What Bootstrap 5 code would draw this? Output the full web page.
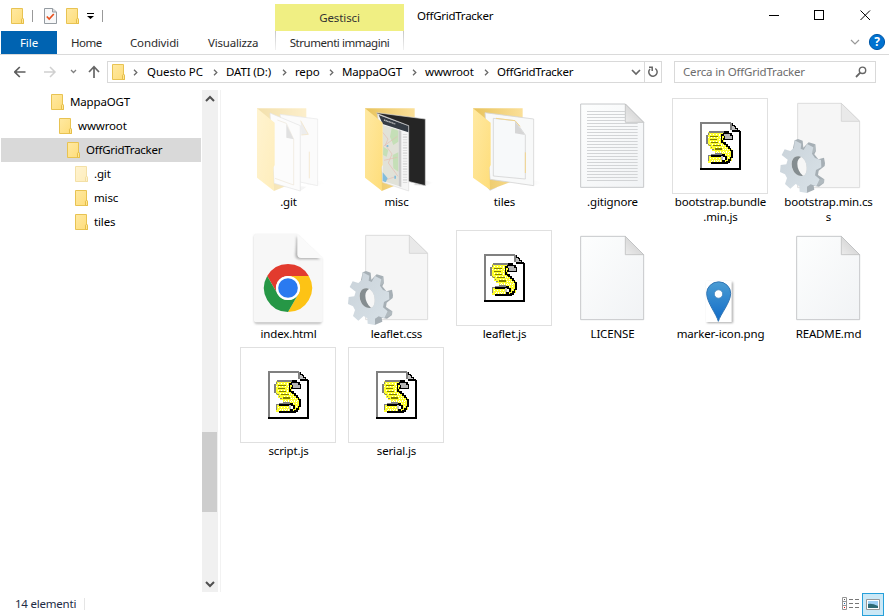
<!DOCTYPE html>
<html lang="it">
<head>
<meta charset="utf-8">
<title>OffGridTracker</title>
<link href="https://cdn.jsdelivr.net/npm/bootstrap@5.3.0/dist/css/bootstrap.min.css" rel="stylesheet">
<style>
body{font:11.5px/16px "Noto Sans","Open Sans",sans-serif;color:#000;background:#fff;height:616px;overflow:hidden;letter-spacing:-.15px}
svg{display:block;flex:none}
.titlebar{height:31px;flex:none}
.quick{width:275px;padding-left:11px}
.quick-sep{width:1px;height:12px;background:#999}
.check-icon{margin-left:3px;margin-right:9px}
.ctx{width:129px;height:27px;margin-top:4px;background:#f0ef83;color:#333;letter-spacing:-.1px}
.win-title{padding-left:13px;letter-spacing:-.25px}
.ribbon{height:24px;flex:none;border-bottom:1px solid #dadada;color:#2b2b2b;letter-spacing:-.05px}
.ribbon .tab{height:23px;white-space:nowrap}
.ribbon .tab-file{width:56px;margin-left:1px;background:#0063b1;color:#fff}
.tab-home{width:73px;padding-left:14px;letter-spacing:-.5px}.tab-cond{width:78px;letter-spacing:-.15px}.tab-vis{width:67px;letter-spacing:-.2px}
.ribbon .tab-ctx{width:129px;height:19px;border:1px solid;border-width:0 1px;border-image:linear-gradient(#c4c4c4,#f4f4f4) 1;padding-top:4px;letter-spacing:-.45px}
.addr{height:35px;flex:none;padding-top:6px}
.addr-nav{width:107px;padding-left:14px;height:22px}
.addr-box{width:555px;height:22px;border:1px solid #d9d9d9;padding-left:4px}
.search-box{width:202px;height:22px;margin-left:12px;border:1px solid #d9d9d9;color:#6d6d6d;padding:0 8px;letter-spacing:-.18px}
.crumb{letter-spacing:-.15px;flex:none}
.c1{width:79px;margin-left:1px;letter-spacing:-.05px}.c2{width:69px}.c3{width:47px}.c4{width:83px}.c5{width:72px}.c6{width:120px;letter-spacing:-.25px}
.crumb svg{margin-right:8px}
.refresh{width:17px;height:20px;margin-left:3px;border-left:1px solid #d9d9d9;flex:none}
.main-area{height:502px;flex:none}
.tree{width:201px}
.tree .node{height:24px;gap:6px}
.lv0{padding-left:51px}.lv1{padding-left:59px}.lv2{padding-left:67px}.lv3{padding-left:75px}
.node.sel{background:#d9d9d9;margin-left:1px;padding-left:66px;letter-spacing:-.25px}
.scroller{width:16px;margin-left:1px;background:#f0f0f0}
.scroller svg{margin-left:3px}
.scroller .thumb{width:15px;height:80px;background:#cdcdcd;margin-bottom:64px}
.split{width:1px;margin-left:2px;background:#f2f2f2}
.files{width:648px;margin-left:13px;padding-top:8px;display:grid;grid-template-columns:repeat(6,108px);grid-template-rows:132px 117px 117px}
.file{text-align:center}
.pic{width:96px;height:96px;margin:0 auto}
.framed{border:1px solid #e0e0e0}
.framed svg{margin:-1px}
.lbl{line-height:15px;padding-left:1px}
.statusbar{height:24px;flex:none;padding-left:15px;padding-right:5px;color:#222b45;letter-spacing:-.22px}
.view-list{margin-right:3px}
.view-on{width:22px;height:23px;border:1px solid #26a0da;background:#cbe8f6}
</style>
</head>
<body class="d-flex flex-column">
<svg width="0" height="0" class="position-absolute">
<defs>
<linearGradient id="gf" x2="1" y2="1"><stop stop-color="#ffe9a2"/><stop offset="1" stop-color="#fedd7a"/></linearGradient>
<linearGradient id="gb" x2="1"><stop stop-color="#e8c35c"/><stop offset="1" stop-color="#fbe09a"/></linearGradient>
<linearGradient id="gp" x2="1" y2="1"><stop stop-color="#fdfefe"/><stop offset="1" stop-color="#f1f3f5"/></linearGradient>
<linearGradient id="gc" x1="0" y1="1" x2="1" y2="0"><stop stop-color="#ececec"/><stop offset="1" stop-color="#c8c8c8"/></linearGradient>
<linearGradient id="gm" x2="0" y2="1"><stop stop-color="#4a9cd3"/><stop offset="1" stop-color="#116bc8"/></linearGradient>
<linearGradient id="gg" x2="1" y2="1"><stop stop-color="#c9d2d9"/><stop offset="1" stop-color="#d9e2e8"/></linearGradient>
<linearGradient id="gs" x2="1"><stop stop-color="#bbb" stop-opacity=".7"/><stop offset="1" stop-color="#ddd" stop-opacity="0"/></linearGradient>
<symbol id="sf" viewBox="0 0 13 16"><path d="M.5.5h11v10.200l1 .5v4.300H.5z" fill="url(#gf)" stroke="#e8c352"/><path d="M10.500 15.500v-4.300l.7-.8h.8l.5.8v4.300z" fill="#ffe794" stroke="#e6be49"/></symbol>
<symbol id="chev" viewBox="0 0 5 7"><path d="M1 .8 3.800 3.500 1 6.200" fill="none" stroke="#686868" stroke-width="1.300"/></symbol>
<symbol id="blank" viewBox="0 0 288 288"><path d="M50 19H184L239 74V269H50z" fill="url(#gp)" stroke="#c6c8ca" stroke-width="3"/><path d="M184 19 239 74H184z" fill="url(#gc)" stroke="#bfc1c2" stroke-width="2.500"/></symbol>
<symbol id="css" viewBox="324 15 288 288"><path d="M377 31H508L563 85V284H377z" fill="#f6f6f6" stroke="#dcdcdc" stroke-width="3"/><path d="M508 31 563 85H508z" fill="#e9e9e9" stroke="#d4d4d4" stroke-width="2.500"/>
<path fill="#a6afb5" d="M368 142 378 138 392 143 394 164 410 148 430 154 432 174 427 184 439 199 456 194 459 211 458 219 440 233 438 246 457 259 456 270 441 281 425 278 427 290 404 300 394 283 368 270 360 180z"/>
<path fill="url(#gg)" fill-rule="evenodd" d="M368 142 388 152 386 167 395 171 405 153 424 163 420 182 429 195 447 201 448 223 432 231 429 247 443 259 433 280 416 274 405 281 405 300 383 296 382 280 371 273 355 287 339 273 345 255 339 244 324 237 326 216 343 214 347 200 329 186 338 169 355 174 366 164zM381 190C366 188 358 201 359 217 361 236 374 249 389 249 402 248 405 235 404 221 402 203 393 192 381 190z"/>
<path fill="#f6f6f6" d="M381 190C366 188 358 201 359 217 361 236 374 249 389 249 402 248 405 235 404 221 402 203 393 192 381 190z"/>
<path fill="#858d90" d="M381 190C366 188 358 201 359 217 361 236 374 249 389 249L393 248C382 238 376 226 376 212 376 203 380 196 387 192z"/>
<path fill="#c5cdd1" d="M429 154 432 173 420 182 424 163zM457 259 456 269 433 280 443 259z" opacity=".35"/></symbol>
<symbol id="js" viewBox="21 9 288 288" shape-rendering="crispEdges">
<path d="M107 83H202V108H225V220H107z" fill="#fff"/><path d="M105 81H199V86H110V218H105z" fill="#808080"/><path d="M105 218H222V108H228V225H105z" fill="#000"/>
<path d="M196 84h5v22h-5z" fill="#808080"/><path d="M200 84h5v5h5v5h4v5h5v5h6v6h-25z" fill="#000"/><path d="M202 92h4v5h4v5h6v4h-14z" fill="#c0c0c0"/>
<path d="M135 109H190V114H200V119H205V136H177V143H184V149H190V155H196V162H201V169H205V187H200V198H194V204H188V208H137V203H129V181H137V176H149V169H142V162H136V153H128V146H123V119H130V112H135z" fill="#ffff2b"/>
<path d="M135 118.500H168M129 127.500H168M135 139.500H165M141 148.500H174M153 157.500H186M156 169.500H195M180 178.500H198M135 190.500H168M138 199.500H186" stroke="#fff" stroke-width="3" stroke-dasharray="3 6"/>
<path d="M162 121.500H168M162 133.500H168M162 142.500H174M168 151.500H180M174 163.500H192M153 172.500H195M183 187.500H198M141 195.500H168" stroke="#fff" stroke-width="3" stroke-dasharray="3 3"/>
<path d="M132 109H178V114H132zM128 114H133V119H128zM123 119H128V147H123zM128 147H133V153H137V158H141V165H146V171H150V177H137V181H129V199H133V184H137V181H172V175H150V171H146V163H141V155H137V149H128z" fill="#808080"/>
<path d="M134 123H160V127H134zM134 132H156V136H134zM138 141H160V145H138zM145 150H168V154H145zM150 160H172V164H150z" fill="#808000"/>
<path d="M178 109H192V114H200V119H205V136H174V130H178V123H170V136H174V143H168V118H174V114H178z" fill="#000"/><path d="M178 118H196V123H201V132H180z" fill="#b5b5b5"/>
<path d="M174 142H183V147H189V153H194V159H199V164H204V190H199V197H194V203H188V207H137V202H182V198H188V192H194V187H199V168H194V163H189V157H184V151H178V146H174z" fill="#000"/>
<path d="M137 181H170V186H137zM172 178H179V182H185V195H179V201H172V195H177V185H172z" fill="#000"/><path d="M169 184h5v12h-5z" fill="#c0c0c0"/><path d="M174 186h5v8h-5z" fill="#fff"/></symbol>
</defs></svg>

<header class="titlebar d-flex">
<div class="quick d-flex align-items-center">
<svg width="13" height="16"><use href="#sf"/></svg><div class="quick-sep ms-2 me-2"></div>
<svg width="13" height="16" class="check-icon" viewBox="0 0 13 16"><path d="M.5.500h8l4 3.500v11.500H.5z" fill="#f7f8f9" stroke="#949ba1"/><path d="M8.500.500V4h4" fill="#ddd" stroke="#949ba1"/><path d="M2.800 8.500 5.200 11l4.600-5" fill="none" stroke="#e8501e" stroke-width="1.700"/></svg>
<svg width="13" height="16" class="me-1"><use href="#sf"/></svg>
<svg width="7" height="6" class="ms-1" viewBox="0 0 7 6"><path d="M0 0h7v1H0zM0 3h7L3.500 6z"/></svg><div class="quick-sep ms-2"></div>
</div>
<div class="ctx d-flex align-items-center justify-content-center">Gestisci</div>
<div class="win-title d-flex align-items-center flex-grow-1">OffGridTracker</div>
<svg width="120" height="31" viewBox="769 0 120 31" fill="none" stroke="#000" shape-rendering="crispEdges"><path d="M769 15.500h10M814.500 10.500h9v9h-9z"/><path d="m860.500 10.500 9.500 9.500m0-9.500-9.500 9.500" shape-rendering="auto"/></svg>
</header>
<nav class="ribbon d-flex">
<div class="tab tab-file d-flex align-items-center justify-content-center">File</div>
<div class="tab tab-home d-flex align-items-center">Home</div>
<div class="tab tab-cond d-flex align-items-center">Condividi</div>
<div class="tab tab-vis d-flex align-items-center">Visualizza</div>
<div class="tab tab-ctx d-flex align-items-center justify-content-center">Strumenti immagini</div>
<svg class="ms-auto" width="45" height="23" viewBox="844 31 45 23"><path d="m851 40 4 4 4-4" fill="none" stroke="#999" stroke-width="1.200"/><circle cx="877" cy="42" r="7.600" fill="#0072d0" stroke="#0057a8"/><text x="877" y="46.300" text-anchor="middle" font-size="12" font-weight="700" fill="#fff">?</text></svg>
</nav>
<div class="addr d-flex">
<div class="addr-nav d-flex align-items-center"><svg width="90" height="20" viewBox="14 62 90 20" fill="none"><path d="M25.500 72H14.800m5-5-5 5 5 5" stroke="#5d5d5d" stroke-width="1.700"/><path d="M44 72h11m-5-5 5 5-5 5" stroke="#d0d0d0" stroke-width="1.500"/><path d="m71 70 2.500 2.500L76 70" stroke="#808080" stroke-width="1.300"/><path d="M94 78V67m-5 5 5-5.300 5 5.300" stroke="#666" stroke-width="1.700"/></svg></div>
<div class="addr-box d-flex align-items-center">
<svg width="13" height="16"><use href="#sf"/></svg><svg width="5" height="7" class="ms-2 me-2"><use href="#chev"/></svg>
<div class="crumb c1 d-flex align-items-center justify-content-between">Questo PC<svg width="5" height="7"><use href="#chev"/></svg></div>
<div class="crumb c2 d-flex align-items-center justify-content-between">DATI (D:)<svg width="5" height="7"><use href="#chev"/></svg></div>
<div class="crumb c3 d-flex align-items-center justify-content-between">repo<svg width="5" height="7"><use href="#chev"/></svg></div>
<div class="crumb c4 d-flex align-items-center justify-content-between">MappaOGT<svg width="5" height="7"><use href="#chev"/></svg></div>
<div class="crumb c5 d-flex align-items-center justify-content-between">wwwroot<svg width="5" height="7"><use href="#chev"/></svg></div>
<div class="crumb c6">OffGridTracker</div>
<svg class="ms-auto" width="10" height="8" viewBox="0 0 10 8"><path d="m1 2 4 4 4-4" fill="none" stroke="#666" stroke-width="1.700"/></svg>
<div class="refresh d-flex align-items-center justify-content-center"><svg width="12" height="12" viewBox="0 0 12 12" fill="none" stroke="#666" stroke-width="1.500"><path d="M8.300 2.500A4.200 4.200 0 1 1 3 3M2 1.300h3.200V5"/></svg></div>
</div>
<div class="search-box d-flex align-items-center justify-content-between">Cerca in OffGridTracker<svg width="12" height="12" viewBox="0 0 12 12" fill="none" stroke="#666"><circle cx="7.500" cy="4.300" r="3.200" stroke-width="1.400"/><path d="M5.300 6.700 1 11" stroke-width="1.800"/></svg></div>
</div>

<main class="main-area d-flex">
<aside class="tree">
<div class="node lv0 d-flex align-items-center"><svg width="13" height="16"><use href="#sf"/></svg>MappaOGT</div>
<div class="node lv1 d-flex align-items-center"><svg width="13" height="16"><use href="#sf"/></svg>wwwroot</div>
<div class="node sel d-flex align-items-center"><svg width="13" height="16"><use href="#sf"/></svg>OffGridTracker</div>
<div class="node lv3 d-flex align-items-center"><svg width="13" height="16" class="opacity-50"><use href="#sf"/></svg>.git</div>
<div class="node lv3 d-flex align-items-center"><svg width="13" height="16"><use href="#sf"/></svg>misc</div>
<div class="node lv3 d-flex align-items-center"><svg width="13" height="16"><use href="#sf"/></svg>tiles</div>
</aside>
<div class="scroller d-flex flex-column align-items-start">
<svg width="10" height="18" viewBox="0 0 10 18"><path d="m1 11 4-4 4 4" fill="none" stroke="#505050" stroke-width="2"/></svg>
<div class="thumb mt-auto"></div>
<svg width="10" height="16" viewBox="0 0 10 16"><path d="m1 6 4 4 4-4" fill="none" stroke="#505050" stroke-width="2"/></svg>
</div>
<div class="split"></div>
<section class="files">
<div class="file"><div class="pic"><svg width="96" height="96" viewBox="0 9 288 288" opacity=".5"><path d="M200 268 233 272 258 264 233 257zM130 270 181 288 200 275z" fill="url(#gs)"/><path d="M51 40H199V248L102 288z" fill="url(#gb)"/><path d="M120 58 233 72V272L150 255z" fill="#f8f8f8" stroke="#d0d0d0" stroke-width="2"/><path d="M182 77 205 118 184 120M208 170v80" fill="#ddd" stroke="#e7c785" stroke-width="2"/><path d="M90 54 181 92V288L102 265z" fill="#fafafa" stroke="#c8c8c8" stroke-width="2"/><path d="M112 75 139 85 161 133V270L105 250" fill="none" stroke="#ddcfb4" stroke-width="2"/><path d="M139 88V128L161 133z" fill="#c4c4c4"/><path d="M51 40 104 83V210L100 218 102 288 51 248z" fill="url(#gf)"/></svg></div><div class="lbl">.git</div></div>
<div class="file"><div class="pic"><svg width="96" height="96" viewBox="324 9 288 288"><path d="M520 270 556 272 580 263 556 256z" fill="url(#gs)"/><path d="M375 40H524V248L425 288z" fill="url(#gb)"/><path d="M410 53 556 72V272L500 258z" fill="#252525" stroke="#d7d7d7" stroke-width="2"/><path d="M413 56 506 92V288L428 262z" fill="#f6f6f6" stroke="#ddd" stroke-width="2"/><path d="M416 60 505 93V112L428 87z" fill="#343b43"/><path d="m432 75 34 12" stroke="#bbb" stroke-width="4" stroke-dasharray="4 1"/><path d="M428 90 476 104V273L428 258z" fill="#e1e2d8"/><path d="M455 100 475 107V140L460 150 450 125zM430 155 445 165 440 185 429 180zM458 180 475 172V230L460 220z" fill="#c5dfb7"/><path d="m428 112 16 20-8 18 20 27-11 27 29 40m-44-90 42-30m-40 72 40-9m-43 70 38-12" fill="none" stroke="#e4bdb2" stroke-width="2"/><path d="M428 232 443 250 437 262 428 258zM440 150h5v6h-5zM463 242h5v9h-5z" fill="#82bddc"/><path d="M476 105 484 108V276L476 273z" fill="#c9c9c9"/><path d="M495 117v150" stroke="#dcdcdc" stroke-width="13" stroke-dasharray="3 4 5 4"/><path d="M375 40 428 83V210L424 217 426 288 375 248z" fill="url(#gf)"/></svg></div><div class="lbl">misc</div></div>
<div class="file"><div class="pic"><svg width="96" height="96" viewBox="-12 9 288 288"><path d="M180 268 221 272 248 263 221 256zM80 275 90 287 112 277z" fill="url(#gs)"/><path d="M39 40H188V248L90 284z" fill="url(#gb)"/><path d="M75 53 221 72V272L90 253z" fill="#f8f9f9" stroke="#d5d5d5" stroke-width="2.500"/><path d="M100 70 165 77 196 120V252L100 243z" fill="#f7f9fa" stroke="#ccc" stroke-width="2"/><path d="M108 70 165 77 180 94M196 172v62" fill="none" stroke="#f2d48c" stroke-width="3"/><path d="M165 79V115L195 120z" fill="#d6d6d6"/><path d="M39 40 92 83V210L88 218 90 284 39 248z" fill="url(#gf)"/></svg></div><div class="lbl">tiles</div></div>
<div class="file"><div class="pic"><svg width="96" height="96" viewBox="0 0 288 288"><use href="#blank" width="288" height="288" y="-1"/><path d="M69 40.500H184M69 49.500H184M69 58.500H184M69 67.500H184M69 76.500H221M69 85.500H221M69 94.500H221M69 103.500H221M69 112.500H221M69 121.500H221M69 130.500H221M69 139.500H221M69 148.500H221M69 157.500H221M69 166.500H221M69 175.500H221M69 184.500H221M69 193.500H221M69 202.500H221M69 211.500H221M69 220.500H221M69 229.500H221M69 238.500H221M69 247.500H221" stroke="#d2d4d6" stroke-width="3"/></svg></div><div class="lbl">.gitignore</div></div>
<div class="file"><div class="pic framed"><svg width="96" height="96"><use href="#js"/></svg></div><div class="lbl">bootstrap.bundle<br>.min.js</div></div>
<div class="file"><div class="pic"><svg width="96" height="96"><use href="#css"/></svg></div><div class="lbl">bootstrap.min.cs<br>s</div></div>
<div class="file"><div class="pic"><svg width="96" height="96" viewBox="0 15 288 288"><defs><filter id="bl"><feGaussianBlur stdDeviation="3"/></filter></defs><path d="M47 30H170L245 102V290Q245 297 238 297H50Q43 297 43 290V34z" fill="#888" filter="url(#bl)" opacity=".55"/><path d="M48 27H172L248 99V286Q248 292 241 292H48Q42 292 42 286V33Q42 27 48 27z" fill="#f7f7f7"/><path d="M170 34 240 103H178Q166 101 166 90z" fill="#999" filter="url(#bl)" opacity=".75"/><path d="M172 27 248 99H183Q172 99 172 88z" fill="#fafafa"/><path d="M81.600 153A72 72 0 0 1 206.400 153H144A36 36 0 0 0 112.800 207z" fill="#e23b2e"/><path d="M206.400 153A72 72 0 0 1 144 261L175.200 207A36 36 0 0 0 144 153z" fill="#fdc315"/><path d="M144 261A72 72 0 0 1 81.600 153L112.800 207A36 36 0 0 0 175.200 207z" fill="#269746"/><circle cx="144" cy="189" r="36" fill="#fff"/><circle cx="144" cy="189" r="29.500" fill="#2a7af0"/></svg></div><div class="lbl">index.html</div></div>
<div class="file"><div class="pic"><svg width="96" height="96"><use href="#css"/></svg></div><div class="lbl">leaflet.css</div></div>
<div class="file"><div class="pic framed"><svg width="96" height="96"><use href="#js"/></svg></div><div class="lbl">leaflet.js</div></div>
<div class="file"><div class="pic"><svg width="96" height="96"><use href="#blank"/></svg></div><div class="lbl">LICENSE</div></div>
<div class="file"><div class="pic"><svg width="96" height="96" viewBox="21 15 288 288"><path d="M126 172h78v122h-78z" fill="#888" filter="url(#bl)" opacity=".7"/><path d="M122 168h78v123h-78z" fill="#fff"/><path d="M160 289C155 268 125 232 125 205A35.500 34 0 0 1 197 205C197 232 166 268 160 289z" fill="url(#gm)" stroke="#3276b5" stroke-width="3"/><circle cx="160.500" cy="207" r="12.500" fill="#fff" stroke="#3679b2" stroke-width="2"/></svg></div><div class="lbl">marker-icon.png</div></div>
<div class="file"><div class="pic"><svg width="96" height="96"><use href="#blank"/></svg></div><div class="lbl">README.md</div></div>
<div class="file"><div class="pic framed"><svg width="96" height="96"><use href="#js"/></svg></div><div class="lbl">script.js</div></div>
<div class="file"><div class="pic framed"><svg width="96" height="96"><use href="#js"/></svg></div><div class="lbl">serial.js</div></div>
</section>
</main>
<footer class="statusbar d-flex align-items-center">14 elementi<div class="quick-sep opacity-25 ms-2"></div>
<svg class="ms-auto view-list" width="17" height="14" viewBox="0 0 17 14"><path d="M.5.500h4v12h-4zM.5 4.500h4M.5 8.500h4" fill="none" stroke="#969696"/><path d="M2 2h1v1H2z" fill="#555"/><path d="M2 6h1v1H2z" fill="#26a"/><path d="M2 10h1v1H2z" fill="#e00"/><path d="M7 2.500h4m2 0h4M7 6.500h4m2 0h4M7 10.500h4m2 0h4" stroke="#777"/></svg>
<div class="view-on d-flex align-items-center justify-content-center"><svg width="14" height="11" viewBox="0 0 14 11"><path d="M.5.500h13v10H.5z" fill="#fff" stroke="#969696"/><path d="M2 2h10v7H2z" fill="#9fd0f5"/><path d="M2 5q4-1 10 2v2H2z" fill="#2e6a75"/></svg></div>
</footer>
<script src="https://cdn.jsdelivr.net/npm/bootstrap@5.3.0/dist/js/bootstrap.bundle.min.js"></script>
</body>
</html>
